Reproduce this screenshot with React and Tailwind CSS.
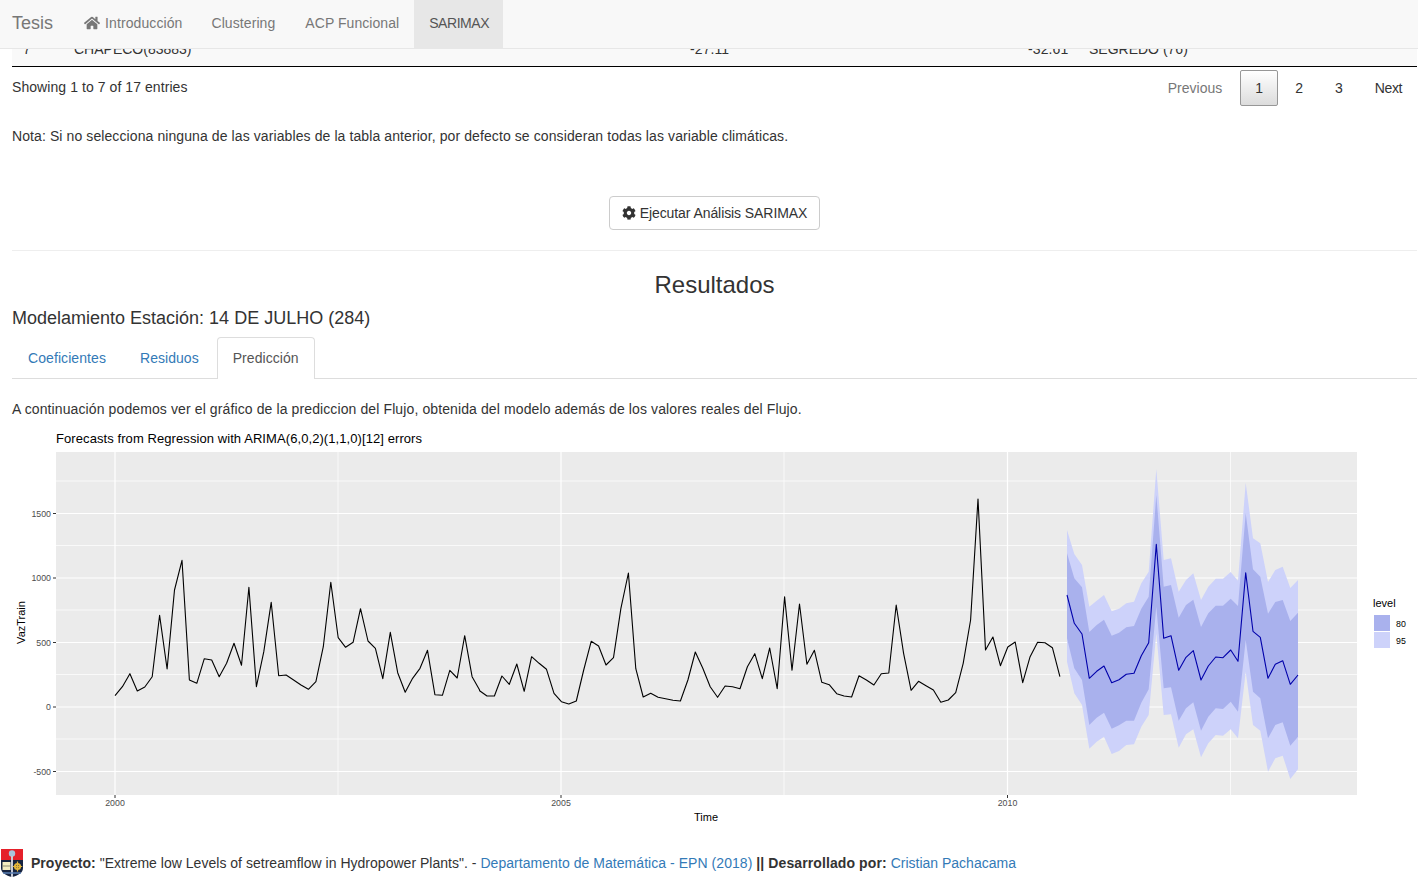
import React from "react";
import { FaHome, FaCog } from "react-icons/fa";

const seriesA = [797,770,731,783,771,740,556,717,480,391,750,760,686,690,740,700,640,706,472,770,665,517,737,735,750,765,778,755,650,457,623,652,637,536,633,655,746,607,728,787,745,715,661,794,796,721,744,617,740,780];
const seriesB = [632,648,648,588,613,552,634,530,550,568,640,665,672,663,570,484,498,555,533,385,279,566,651,640,652,656,661,663,600,516,565,620,652,618,620,626,560,521,596,504,626,350,571,372,553,511,607,614,641,648,651,587,600,615,581,579,375,520,631,604,617,630,667,660,638,550,420,57,510,471,557,501,486,608,530,487,488,503,590];
const hist = [
  ...seriesA.map((v, i) => [115 + i * 7.44, 430 + v / 3]),
  ...seriesB.map((v, i) => [115 + (i + 49) * 7.44, 480 + v / 3]),
];
const fx = [81,103,126,148,170,192,215,237,259,282,304,326,349,371,393,416,438,460,483,505,527,549,572,594,617,639,661,684,706,728,751,774].map((v) => 1040 + v / 3);
const fy = (v) => 450 + v / 3;
const mid = [435,520,552,685,664,648,698,689,673,670,617,578,283,565,557,661,622,602,690,648,621,623,600,634,368,544,562,685,643,632,703,675];
const u80 = [310,385,412,546,525,509,557,548,532,528,476,440,135,410,405,503,465,449,531,490,467,467,446,468,190,358,380,491,456,450,513,488];
const l80 = [565,655,690,825,803,788,836,826,812,812,758,718,470,715,712,812,775,757,842,800,775,777,755,785,570,725,745,865,825,817,887,860];
const u95 = [240,312,345,470,452,435,484,476,460,455,400,365,57,330,325,425,390,370,450,410,386,386,366,392,98,265,280,396,360,350,414,390];
const l95 = [635,730,765,896,875,860,912,903,885,883,830,795,550,795,793,893,853,838,922,880,855,857,838,865,665,825,842,965,925,917,987,958];

const line = (ys) => ys.map((v, i) => `${fx[i].toFixed(1)},${fy(v).toFixed(1)}`).join(" ");
const band = (up, lo) => `${line(up)} ${[...lo].map((v, i) => `${fx[lo.length - 1 - i].toFixed(1)},${fy(lo[lo.length - 1 - i]).toFixed(1)}`).join(" ")}`;

const hMinor = [481, 545.5, 610, 674.5, 739];
const hMajor = [[513.5, "1500"], [578, "1000"], [642.5, "500"], [707, "0"], [771.5, "-500"]];
const vMinor = [338, 784, 1230.5];
const vMajor = [[115, "2000"], [561, "2005"], [1007.5, "2010"]];

function Chart() {
  return (
    <svg width="1405" height="411" viewBox="12 429 1405 411" className="block" style={{ fontFamily: '"Liberation Sans", Arial, sans-serif' }}>
      <text x="56" y="443" fontSize="13" letterSpacing="0.08" fill="#000">Forecasts from Regression with ARIMA(6,0,2)(1,1,0)[12] errors</text>
      <rect x="56" y="452" width="1301" height="343" fill="#ebebeb" />
      {hMinor.map((y) => <line key={y} x1="56" x2="1357" y1={y} y2={y} stroke="#fff" strokeWidth="0.7" />)}
      {vMinor.map((x) => <line key={x} x1={x} x2={x} y1="452" y2="795" stroke="#fff" strokeWidth="0.7" />)}
      {hMajor.map(([y]) => <line key={y} x1="56" x2="1357" y1={y} y2={y} stroke="#fff" strokeWidth="1.2" />)}
      {vMajor.map(([x]) => <line key={x} x1={x} x2={x} y1="452" y2="795" stroke="#fff" strokeWidth="1.2" />)}
      {hMajor.map(([y, t]) => (
        <g key={t}>
          <line x1="53" x2="56" y1={y} y2={y} stroke="#333" strokeWidth="1" />
          <text x="51" y={y + 3} fontSize="8.8" textAnchor="end" fill="#4d4d4d">{t}</text>
        </g>
      ))}
      {vMajor.map(([x, t]) => (
        <g key={t}>
          <line x1={x} x2={x} y1="795" y2="798" stroke="#333" strokeWidth="1" />
          <text x={x} y="806" fontSize="8.8" textAnchor="middle" fill="#4d4d4d">{t}</text>
        </g>
      ))}
      <polyline points={hist.map((p) => p.map((n) => n.toFixed(1)).join(",")).join(" ")} fill="none" stroke="#000" strokeWidth="1.1" strokeLinejoin="round" />
      <polygon points={band(u95, l95)} fill="#cdd2fa" />
      <polygon points={band(u80, l80)} fill="#a9b1ed" />
      <polyline points={line(mid)} fill="none" stroke="#0000aa" strokeWidth="1.1" strokeLinejoin="round" />
      <text x="706" y="821" fontSize="11" textAnchor="middle" fill="#000">Time</text>
      <text transform="translate(25 622.5) rotate(-90)" fontSize="11" textAnchor="middle" fill="#000">VazTrain</text>
      <text x="1373" y="607" fontSize="11" fill="#000">level</text>
      <rect x="1374" y="615" width="16" height="16" fill="#a9b1ed" />
      <rect x="1374" y="632" width="16" height="16" fill="#cdd2fa" />
      <text x="1396" y="626.5" fontSize="8.8" fill="#000">80</text>
      <text x="1396" y="643.5" fontSize="8.8" fill="#000">95</text>
    </svg>
  );
}

function Logo() {
  return (
    <svg width="24" height="28" viewBox="0 0 24 28" className="block shrink-0">
      <path d="M1 0H23V19C23 24 18 26.5 12 28C6 26.5 1 24 1 19Z" fill="#16233f" />
      <rect x="1" y="0" width="22" height="11" fill="#e5202a" />
      <circle cx="12" cy="4.5" r="3.2" fill="#a9c4dc" />
      <rect x="11" y="7" width="2" height="21" fill="#c9ccd6" />
      <rect x="2.5" y="13" width="8" height="8" fill="#f4edc0" />
      <path d="M2.5 17H10.5" stroke="#8a8a70" strokeWidth="1" />
      <circle cx="17.5" cy="17.5" r="3.6" fill="#e3b53a" />
      <circle cx="17.5" cy="17.5" r="1.4" fill="#16233f" />
      <path d="M17.5 12.5V22.5M12.8 17.5H22.2" stroke="#e3b53a" strokeWidth="1.2" />
      <path d="M3 24H21" stroke="#5a7fb5" strokeWidth="1.5" />
    </svg>
  );
}

const pageBtn = "flex h-9 items-center justify-center px-[15px] ml-0.5";

export default function App() {
  return (
    <div className="relative h-[877px] overflow-hidden bg-white font-['Liberation_Sans',Arial,sans-serif] text-sm leading-5 text-[#333]">
      <nav className="absolute inset-x-0 top-0 z-10 flex h-[49px] items-stretch border-b border-[#e7e7e7] bg-[#f8f8f8] pl-3 text-[#777]">
        <div className="flex h-12 items-center pb-0.5 pr-[15px] text-lg">Tesis</div>
        <div className="flex h-12 items-center gap-[5px] pb-0.5 pl-4 pr-[14px] tracking-[0.1px]"><FaHome className="size-[16px]" /><span>Introducción</span></div>
        <div className="flex h-12 items-center px-[15px] pb-0.5 tracking-[0.08px]">Clustering</div>
        <div className="flex h-12 items-center px-[15px] pb-0.5 tracking-[0.06px]">ACP Funcional</div>
        <div className="flex h-12 w-[89px] items-center bg-[#e7e7e7] px-[15px] pb-0.5 tracking-[-0.45px] text-[#555]">SARIMAX</div>
      </nav>

      <main className="pl-3 pr-px pt-[30px]">
        <div className="flex h-[37px] items-center border-b border-black bg-[#f9f9f9] pt-px">
          <span className="ml-[11px] w-[51px]">7</span>
          <span className="w-[616px]">CHAPECO(83883)</span>
          <span className="w-[338px] tracking-[0.1px]">-27.11</span>
          <span className="w-[61px] tracking-[0.1px]">-32.61</span>
          <span>SEGREDO (76)</span>
        </div>

        <div className="flex items-start justify-between pt-[3px]">
          <div className="pt-[7px] tracking-[0.07px]">Showing 1 to 7 of 17 entries</div>
          <div className="flex">
            <div className={`${pageBtn} pr-4 text-[#777]`}>Previous</div>
            <div className="ml-0.5 flex h-9 w-[38px] items-center justify-center rounded-[2px] border border-[#979797] bg-gradient-to-b from-white to-[#dcdcdc]">1</div>
            <div className={pageBtn}>2</div>
            <div className={pageBtn}>3</div>
            <div className={`${pageBtn} tracking-[-0.4px]`}>Next</div>
          </div>
        </div>

        <p className="mt-[20px] tracking-[0.095px]">Nota: Si no selecciona ninguna de las variables de la tabla anterior, por defecto se consideran todas las variable climáticas.</p>

        <div className="mt-[50px] flex justify-center">
          <button className="flex h-[34px] w-[211px] items-center justify-center gap-1 rounded border border-[#ccc] bg-white tracking-[-0.08px]">
            <FaCog className="size-[14px]" /><span>Ejecutar Análisis SARIMAX</span>
          </button>
        </div>

        <div className="mt-5 border-t border-[#eee]" />

        <h3 className="mt-[19px] text-center text-2xl leading-[29px]">Resultados</h3>
        <h4 className="mt-[9px] text-lg leading-5">Modelamiento Estación: 14 DE JULHO (284)</h4>

        <div className="mt-[9px] flex h-[42px] border-b border-[#ddd]">
          <div className="mr-0.5 px-4 pt-[11px] tracking-[0.08px] text-[#337ab7]">Coeficientes</div>
          <div className="mr-0.5 px-4 pt-[11px] tracking-[0.04px] text-[#337ab7]">Residuos</div>
          <div className="h-[42px] rounded-t border border-b-0 border-[#ddd] bg-white px-[15px] pt-[10px] tracking-[0.05px] text-[#555]">Predicción</div>
        </div>

        <p className="mt-5 tracking-[0.11px]">A continuación podemos ver el gráfico de la prediccion del Flujo, obtenida del modelo además de los valores reales del Flujo.</p>

        <div className="mt-[10px]"><Chart /></div>
      </main>

      <footer className="mt-[9px] flex items-end gap-[7px]">
        <Logo />
        <p className="pb-1 leading-5 tracking-[0.02px]"><b>Proyecto:</b> "Extreme low Levels of setreamflow in Hydropower Plants". - <span className="tracking-[0.05px] text-[#337ab7]">Departamento de Matemática - EPN (2018)</span> <b className="tracking-[0.1px]">|| Desarrollado por:</b> <span className="tracking-normal text-[#337ab7]">Cristian Pachacama</span></p>
      </footer>
    </div>
  );
}
